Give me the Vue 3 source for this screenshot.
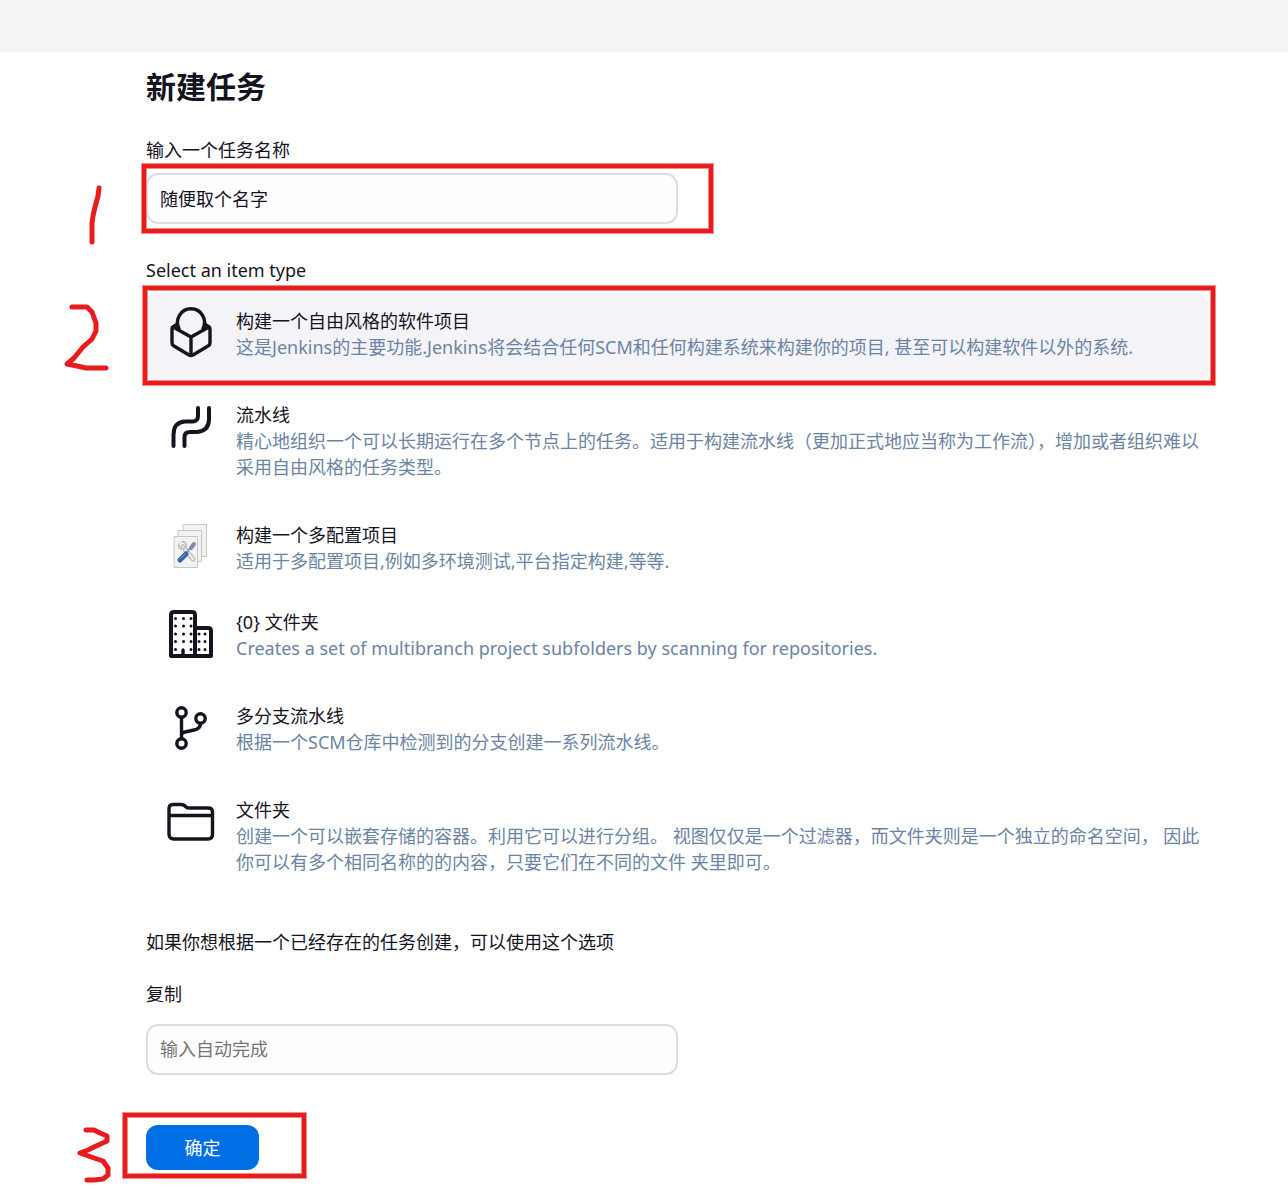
<script setup>
import { ref } from 'vue'

const name = ref('随便取个名字')
const copyFrom = ref('')
const selected = ref('freestyle')

const items = [
  {
    id: 'freestyle',
    title: '构建一个自由风格的软件项目',
    desc: '这是Jenkins的主要功能.Jenkins将会结合任何SCM和任何构建系统来构建你的项目, 甚至可以构建软件以外的系统.'
  },
  {
    id: 'pipeline',
    title: '流水线',
    desc: '精心地组织一个可以长期运行在多个节点上的任务。适用于构建流水线（更加正式地应当称为工作流），增加或者组织难以采用自由风格的任务类型。'
  },
  {
    id: 'matrix',
    title: '构建一个多配置项目',
    desc: '适用于多配置项目,例如多环境测试,平台指定构建,等等.',
    compact: true
  },
  {
    id: 'organization',
    title: '{0} 文件夹',
    desc: 'Creates a set of multibranch project subfolders by scanning for repositories.'
  },
  {
    id: 'multibranch',
    title: '多分支流水线',
    desc: '根据一个SCM仓库中检测到的分支创建一系列流水线。'
  },
  {
    id: 'folder',
    title: '文件夹',
    desc: '创建一个可以嵌套存储的容器。利用它可以进行分组。 视图仅仅是一个过滤器，而文件夹则是一个独立的命名空间， 因此你可以有多个相同名称的的内容，只要它们在不同的文件 夹里即可。'
  }
]
</script>

<template>
  <div class="page">
    <header class="topbar"></header>
    <main class="content">
      <form @submit.prevent>
        <h1>新建任务</h1>

        <label class="label" for="name">输入一个任务名称</label>
        <div class="step step-name">
          <input id="name" v-model="name" class="text-input" type="text" autocomplete="off" />
          <span class="frame frame-name"></span>
          <svg class="mark mark-one" viewBox="0 0 60 80" aria-hidden="true">
            <polyline points="39,8 38,16 35,27 33,36 32,43 32,62" />
          </svg>
        </div>

        <fieldset class="types">
          <legend class="label">Select an item type</legend>
          <div
            v-for="item in items"
            :key="item.id"
            class="item"
            :class="{ active: selected === item.id, compact: item.compact }"
          >
            <input :id="item.id" v-model="selected" class="radio" type="radio" name="type" :value="item.id" />
            <label class="card" :for="item.id">
              <svg v-if="item.id === 'freestyle'" class="icon" viewBox="0 0 48 48" aria-hidden="true">
                <path d="M12 19.500A13.500 13.500 0 1 1 36 19.500" />
                <path d="M10.500 15L6 18Q5 18.500 5 20V34Q5 36 7 37L22 46Q24 47 26 46L41 37Q43 36 43 34V20Q43 18.500 42 18L37.500 15" />
                <path d="M6 18L24 28L42 18M24 28V46" />
              </svg>
              <svg v-else-if="item.id === 'pipeline'" class="icon" viewBox="0 0 48 48" aria-hidden="true">
                <path class="thick" d="M6.500 43V32Q6.500 19 18 18.500H26Q31 18 31 13V5M17.500 43V34Q17.500 29 23 29H30Q42 28 42 16V5" />
              </svg>
              <svg v-else-if="item.id === 'matrix'" class="icon matrix" viewBox="0 0 48 48" aria-hidden="true">
                <rect x="16.500" y="1.500" width="23" height="32" />
                <rect x="11.500" y="7.500" width="23" height="31" />
                <rect x="7.500" y="13.500" width="23" height="31" />
                <path class="wrench-edge" d="M16 24L26 36" />
                <path class="wrench" d="M16 24L26 36" />
                <path class="wrench-jaw" d="M12 21Q11 26 15 26Q20 25 19 21Q18 18 15 19" />
                <path class="driver-shaft" d="M26 22L19 30" />
                <path class="driver-top" d="M27 21L24 25" />
                <path class="driver-handle" d="M19 31L13 37" />
                <path class="driver-shine" d="M18 31L13 36" />
              </svg>
              <svg v-else-if="item.id === 'organization'" class="icon" viewBox="0 0 48 48" aria-hidden="true">
                <path class="thick" d="M4 46V5Q4 2 7 2H25Q28 2 28 5V46M28 18H41Q44 18 44 21V46M4 46H44" />
                <path d="M16 40V46" />
                <path class="dots" d="M8.500 8.500h.01M16.500 8.500h.01M24 8.500h.01M8.500 16h.01M16.500 16h.01M24 16h.01M8.500 24h.01M16.500 24h.01M24 24h.01M8.500 31.500h.01M16.500 31.500h.01M24 31.500h.01M8.500 39.500h.01M24 39.500h.01M32 24h.01M38 24h.01M32 31.500h.01M38 31.500h.01M32 39.500h.01M38 39.500h.01" />
              </svg>
              <svg v-else-if="item.id === 'multibranch'" class="icon" viewBox="0 0 48 48" aria-hidden="true">
                <circle cx="14.500" cy="8.500" r="4.700" />
                <circle cx="33.500" cy="14.500" r="4.700" />
                <circle cx="14.500" cy="39.500" r="4.700" />
                <path d="M14.500 14V34M14.500 31Q15 28.500 18 28L27 26Q33 25 33.500 20" />
              </svg>
              <svg v-else class="icon" viewBox="0 0 48 48" aria-hidden="true">
                <path d="M6 6.500H14Q17 6.500 19 9Q20 10 23 10H41Q45.500 10 45.500 14V36Q45.500 41 41 41H7Q2 41 2 36V11Q2 6.500 6 6.500ZM2 17.500H45.500" />
              </svg>
              <span class="copy">
                <span class="title">{{ item.title }}</span>
                <span class="desc">{{ item.desc }}</span>
              </span>
            </label>
            <template v-if="item.id === 'freestyle'">
              <span class="frame frame-type"></span>
              <svg class="mark mark-two" viewBox="0 0 60 80" aria-hidden="true">
                <polyline points="12,14 27,14 32,19 36,30 36,38 32,46 23,54 14,65 7,71 17,73 26,75 46,75" />
              </svg>
            </template>
          </div>
        </fieldset>

        <p class="hint">如果你想根据一个已经存在的任务创建，可以使用这个选项</p>
        <label class="label copy-label" for="from">复制</label>
        <input id="from" v-model="copyFrom" class="text-input" type="text" placeholder="输入自动完成" />

        <div class="step step-submit">
          <button class="submit" type="submit">确定</button>
          <span class="frame frame-submit"></span>
          <svg class="mark mark-three" viewBox="0 0 60 80" aria-hidden="true">
            <polyline points="26,19 34,19 40,22 47,25 47,30 34,36 28,39 20,42 34,47 43,50 48,57 48,64 43,68 34,69 27,69" />
          </svg>
        </div>
      </form>
    </main>
  </div>
</template>

<style>
body {
  margin: 0;
  background: #fff;
}
</style>

<style scoped>
.page {
  color: #14141f;
  font-family: "Noto Sans", "Noto Sans CJK SC", sans-serif;
  font-size: 18px;
  line-height: 26px;
}

.topbar {
  height: 52px;
  background: #f5f5f8;
}

.content {
  padding: 15px 79px 33px 146px;
}

h1 {
  margin: 0 0 30px;
  font-size: 30px;
  line-height: 40px;
  font-weight: 700;
}

.label {
  display: block;
  padding: 0;
}

.step {
  position: relative;
}

.step-name {
  margin: 10px 0 33px;
}

.text-input {
  display: block;
  box-sizing: border-box;
  width: 50%;
  height: 51px;
  padding: 0 12px 2px;
  border: 2px solid #d8dee6;
  border-radius: 12px;
  background: #fdfdfe;
  color: inherit;
  font: inherit;
  outline: none;
}

.text-input::placeholder {
  color: #757575;
  opacity: 1;
}

.types {
  min-width: 0;
  margin: 0;
  padding: 0;
  border: 0;
}

.types .label {
  margin-bottom: 10px;
}

.item {
  position: relative;
  margin-bottom: 7px;
  border-radius: 12px;
}

.item.active {
  background: #f3f3f8;
}

.radio {
  position: absolute;
  inset: 0;
  margin: 0;
  opacity: 0;
}

.card {
  display: flex;
  gap: 21px;
  padding: 15px 0 20px 21px;
  cursor: pointer;
}

.compact .card {
  padding-bottom: 13px;
}

.icon {
  flex: none;
  width: 48px;
  height: 48px;
  margin-top: 1px;
  overflow: visible;
  fill: none;
  stroke: #14141f;
  stroke-width: 3.400;
  stroke-linecap: round;
  stroke-linejoin: round;
}

.thick {
  stroke-width: 4;
}

.dots {
  stroke-width: 3;
}

.matrix rect {
  fill: #f2f2f0;
  stroke: #c6c6c2;
  stroke-width: 1;
}

.wrench-edge {
  stroke: #b4b4b4;
  stroke-width: 5;
}

.wrench {
  stroke: #e6e6e6;
  stroke-width: 3;
}

.wrench-jaw {
  stroke: #c4c4c4;
  stroke-width: 2;
}

.driver-shaft {
  stroke: #9aa3ad;
  stroke-width: 2;
}

.driver-top {
  stroke: #7690b4;
  stroke-width: 4;
}

.driver-handle {
  stroke: #3465a4;
  stroke-width: 5;
}

.driver-shine {
  stroke: #7da2d2;
  stroke-width: 1;
}

.copy {
  flex: 1;
  min-width: 0;
}

.title,
.desc {
  display: block;
}

.desc {
  color: #6b84a3;
}

.hint {
  margin: 34px 0 26px;
}

.types {
  margin-bottom: -7px;
}

.copy-label {
  margin-bottom: 17px;
}

.step-submit {
  width: fit-content;
  margin-top: 50px;
}

.submit {
  display: block;
  width: 113px;
  height: 45px;
  padding: 0;
  border: 0;
  border-radius: 12px;
  background: #006fe6;
  color: #fff;
  font: inherit;
  cursor: pointer;
}

.frame {
  position: absolute;
  border: 4px solid #e81c1c;
  box-shadow: 0 0 0 1px #f48c8c, inset 0 0 0 1px #f48c8c;
  pointer-events: none;
}

.frame-name {
  top: -9px;
  bottom: -9px;
  left: -4px;
  width: 563px;
}

.frame-type {
  inset: -7px -6px -5px -3px;
}

.frame-submit {
  inset: -12px -47px -8px -23px;
}

.mark {
  position: absolute;
  width: 60px;
  height: 80px;
  fill: none;
  stroke: #e81c1c;
  stroke-width: 5;
  stroke-linecap: round;
  stroke-linejoin: round;
  pointer-events: none;
}

.mark-one {
  top: 7px;
  left: -86px;
}

.mark-two {
  top: 0;
  left: -86px;
}

.mark-three {
  top: -14px;
  left: -86px;
}
</style>
